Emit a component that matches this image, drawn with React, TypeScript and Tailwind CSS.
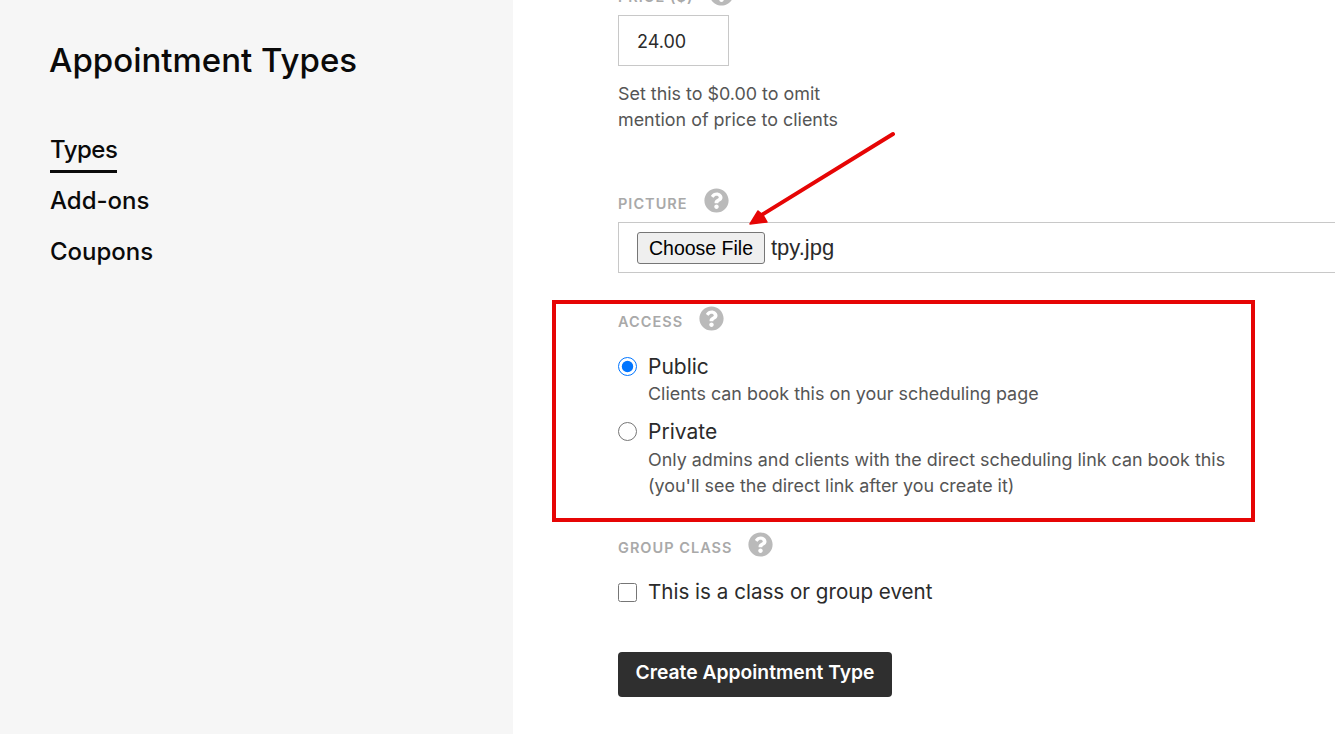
import { FaQuestionCircle } from "react-icons/fa";

function FieldLabel({ text }: { text: string }) {
  return (
    <div className="flex h-[26px] items-center gap-[16px]">
      <span className="pt-[2px] text-[14.5px] font-semibold uppercase tracking-[0.07em] text-[#a9a9a9]">{text}</span>
      <FaQuestionCircle className="-mt-[6px] h-[25px] w-[25px] text-[#bababa]" />
    </div>
  );
}

export default function App() {
  return (
    <div className="relative flex h-screen overflow-hidden bg-white font-['Inter',sans-serif]">
      <aside className="w-[513px] shrink-0 bg-[#f6f6f6] pl-[49px] pt-[40px] text-[#0a0a0a]">
        <h1 className="text-[33px] font-medium leading-[40px]">Appointment Types</h1>
        <nav className="ml-[1px] mt-[55px] flex flex-col items-start text-[24px] font-medium leading-[30px]">
          <a className="w-[67px] whitespace-nowrap border-b-[3px] border-[#0a0a0a] pb-[5px] tracking-[-0.02em]">Types</a>
          <a className="mt-[13px]">Add-ons</a>
          <a className="mt-[21px]">Coupons</a>
        </nav>
      </aside>

      <main className="flex-1 -mt-[17px] pl-[105px]">
        <FieldLabel text="Price ($)" />
        <div className="mt-[6px] flex h-[51px] w-[111px] items-center border border-[#c8c8c8] pl-[18px] pt-[1px] text-[18px] text-[#2b2b2b]">
          24.00
        </div>
        <p className="mt-[15px] text-[17.9px] leading-[26px] text-[#555]">
          Set this to $0.00 to omit
          <br />
          mention of price to clients
        </p>

        <div className="mt-[57px]">
          <FieldLabel text="Picture" />
        </div>
        <div className="mt-[6px] flex h-[51px] items-center border border-r-0 border-[#c8c8c8] pl-[18px] font-['Liberation_Sans',sans-serif]">
          <button className="flex h-[32px] w-[128px] items-center justify-center rounded-[3px] border border-[#767676] bg-[#efefef] pt-[2px] text-[19.5px] text-black">
            Choose File
          </button>
          <span className="ml-[6px] text-[22px] text-[#2b2b2b]">tpy.jpg</span>
        </div>

        <div className="mt-[35px]">
          <FieldLabel text="Access" />
        </div>
        <div className="mt-[19px] flex items-start gap-[11px]">
          <input type="radio" name="access" defaultChecked className="mt-[4px] h-[19px] w-[19px]" />
          <div>
            <div className="text-[21px] leading-[28px] text-[#2b2b2b]">Public</div>
            <div className="text-[17.9px] leading-[26px] text-[#555]">Clients can book this on your scheduling page</div>
          </div>
        </div>
        <div className="mt-[11px] flex items-start gap-[11px]">
          <input type="radio" name="access" className="mt-[4px] h-[19px] w-[19px]" />
          <div>
            <div className="text-[21px] leading-[28px] text-[#2b2b2b]">Private</div>
            <div className="mt-[1px] text-[17.9px] leading-[26px] text-[#555]">
              Only admins and clients with the direct scheduling link can book this
              <br />
              (you'll see the direct link after you create it)
            </div>
          </div>
        </div>

        <div className="mt-[35px]">
          <FieldLabel text="Group Class" />
        </div>
        <div className="mt-[18px] flex items-center gap-[11px]">
          <input type="checkbox" className="h-[19px] w-[19px]" />
          <span className="text-[20.6px] leading-[28px] text-[#2b2b2b]">This is a class or group event</span>
        </div>

        <button className="mt-[46px] h-[45px] w-[274px] rounded-[4px] bg-[#2f2f2f] pb-[4px] text-[19.3px] font-semibold text-white">
          Create Appointment Type
        </button>
      </main>

      {/* annotations */}
      <div className="pointer-events-none absolute left-[552px] top-[300px] h-[222px] w-[703px] border-[4px] border-[#e60505]" />
      <svg className="pointer-events-none absolute left-[740px] top-[125px]" width="160" height="105" viewBox="0 0 160 105" fill="none">
        <path d="M153 9 L20 91" stroke="#e60505" strokeWidth="4" strokeLinecap="round" />
        <path d="M10 99 L18 86 L23 90 L27 97 Z" fill="#e60505" stroke="#e60505" strokeWidth="1.5" strokeLinejoin="round" />
      </svg>
    </div>
  );
}
